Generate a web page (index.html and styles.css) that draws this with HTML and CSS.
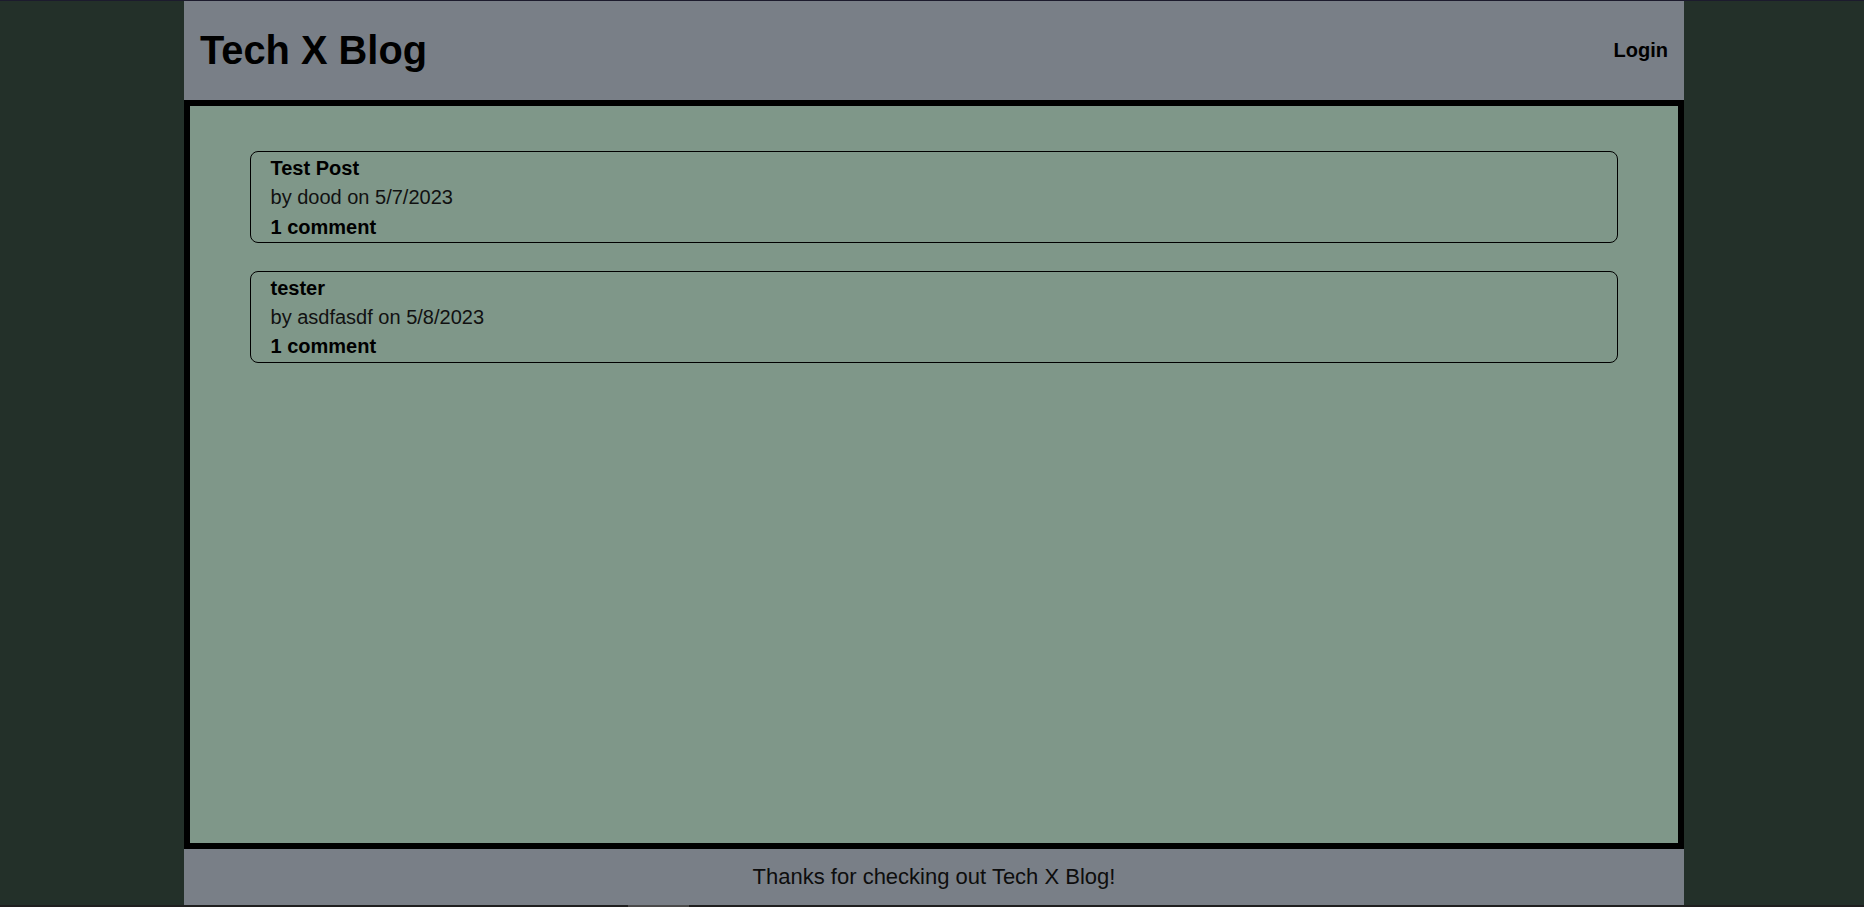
FILE: index.html
```html
<!DOCTYPE html>
<html lang="en">
<head>
<meta charset="utf-8">
<title>Tech X Blog</title>
<link rel="stylesheet" href="styles.css">
</head>
<body>
<div class="topline"></div>
<div class="page">
  <header class="site-header">
    <h1 class="brand">Tech X Blog</h1>
    <nav class="nav"><a class="nav-link" href="#">Login</a></nav>
  </header>
  <main class="content">
    <article class="post-card">
      <h2 class="post-title">Test Post</h2>
      <p class="post-meta">by dood on 5/7/2023</p>
      <p class="post-comments">1 comment</p>
    </article>
    <article class="post-card">
      <h2 class="post-title">tester</h2>
      <p class="post-meta">by asdfasdf on 5/8/2023</p>
      <p class="post-comments">1 comment</p>
    </article>
  </main>
  <footer class="site-footer">Thanks for checking out Tech X Blog!</footer>
</div>
<div class="hscroll"><div class="hscroll-thumb"></div></div>
</body>
</html>
```
FILE: styles.css
```css
html, body {
  margin: 0;
  padding: 0;
  height: 100%;
}
body {
  background: #233029;
  font-family: "Liberation Sans", Arial, sans-serif;
  color: #000;
  display: flex;
  flex-direction: column;
  overflow: hidden;
}
.topline {
  height: 1px;
  background: #1c1b2d;
  flex: none;
}
.page {
  width: 1500px;
  margin-left: 184px;
  flex: 1;
  display: flex;
  flex-direction: column;
  min-height: 0;
}
.site-header {
  height: 99px;
  flex: none;
  background: #797f87;
  display: flex;
  align-items: center;
  justify-content: space-between;
  padding: 0 16px 0 16px;
}
.brand {
  margin: 0;
  font-size: 39.8px;
  font-weight: bold;
  line-height: normal;
}
.nav-link {
  color: #000;
  text-decoration: none;
  font-size: 20px;
  font-weight: bold;
}
.content {
  flex: 1;
  background: #7f9789;
  border: 6px solid #000;
  padding-top: 45px;
  display: flex;
  flex-direction: column;
  align-items: center;
  gap: 28px;
}
.post-card {
  width: 92%;
  box-sizing: border-box;
  border: 1px solid #000;
  border-radius: 8px;
  padding: 2px 20px 0;
  font-size: 20px;
  line-height: 29.3px;
}
.post-title,
.post-meta,
.post-comments {
  margin: 0;
  font-size: 20px;
}
.post-title,
.post-comments {
  font-weight: bold;
}
.post-meta {
  font-weight: normal;
  color: #111;
}
.site-footer {
  height: 56px;
  flex: none;
  background: #797f87;
  display: flex;
  align-items: center;
  justify-content: center;
  font-size: 22px;
  color: #0d0d0d;
}
.hscroll {
  height: 2px;
  flex: none;
  background: #1f1f1f;
}
.hscroll-thumb {
  width: 61px;
  height: 2px;
  margin-left: 628px;
  background: #4b4b4b;
}
```
